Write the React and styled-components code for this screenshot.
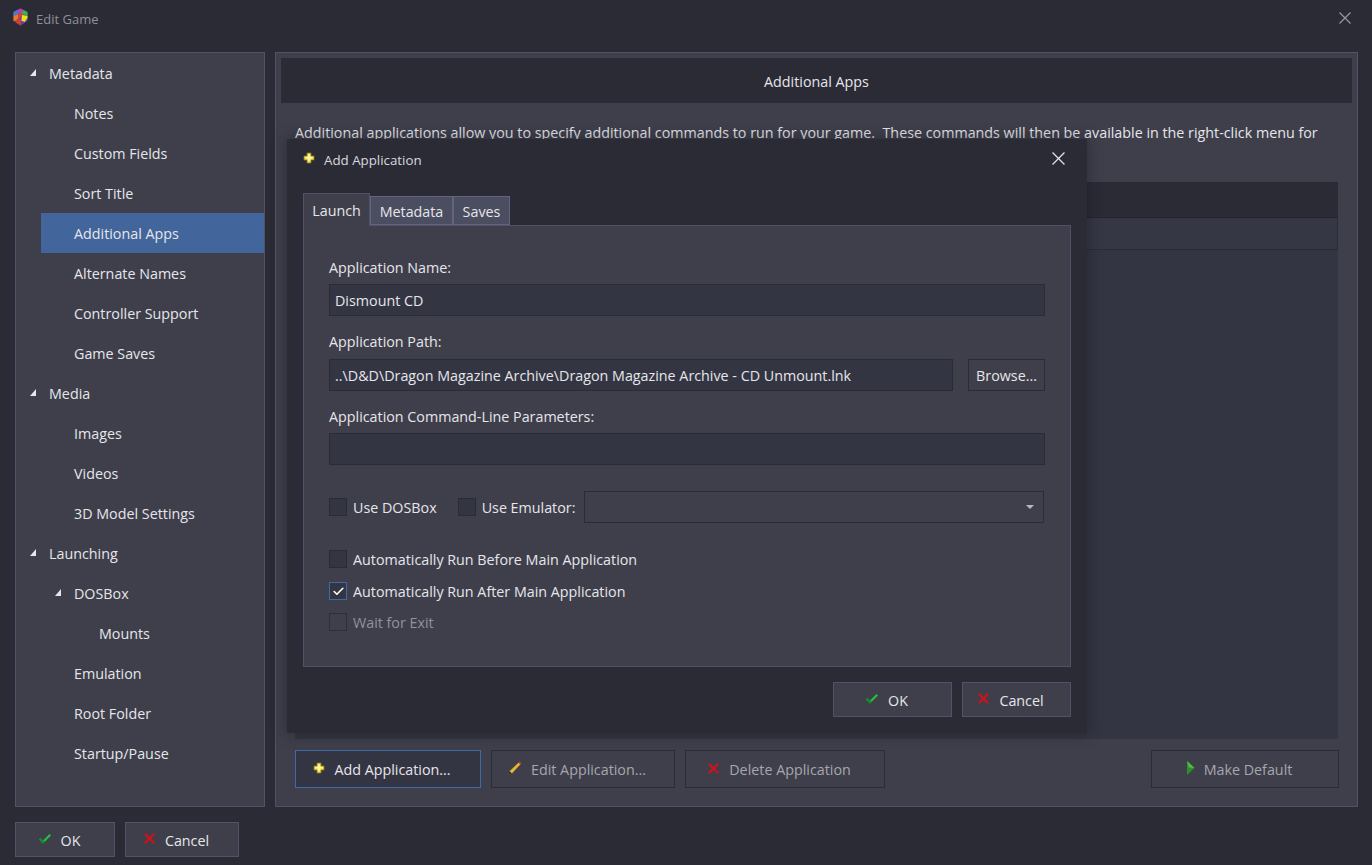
import React from 'react';
import styled, { createGlobalStyle } from 'styled-components';
import { Check } from 'lucide-react';

const GlobalStyle = createGlobalStyle`
  html, body {
    margin: 0;
    padding: 0;
    background: #2b2b36;
  }
  * {
    box-sizing: border-box;
  }
`;

const Window = styled.div`
  position: relative;
  width: 1372px;
  height: 865px;
  overflow: hidden;
  display: flex;
  flex-direction: column;
  background: #2b2b36;
  color: #e6e6ea;
  font-family: "Open Sans", "Noto Sans", sans-serif;
  font-size: 14.3px;
  line-height: 20px;
`;

const TitleBar = styled.div`
  height: 52px;
  flex: none;
  display: flex;
  align-items: flex-start;
  padding: 8px 21px 0 12px;
  gap: 7px;
`;

const WindowTitle = styled.span`
  flex: 1;
  font-size: 13px;
  line-height: 22px;
  color: #8f8f98;
`;

const CloseGlyph = styled.svg`
  display: block;
  flex: none;
  margin-top: ${(p) => p.$top || 0}px;
`;

const Body = styled.div`
  flex: none;
  height: 755px;
  display: flex;
  gap: 10px;
  padding: 0 14px 0 15px;
`;

const Tree = styled.div`
  width: 250px;
  flex: none;
  background: #3e3f4b;
  border: 1px solid #50526a;
`;

const TreeRow = styled.div`
  height: 40px;
  display: flex;
  align-items: center;
  padding: 2px 0 0 14px;
  margin-left: ${(p) => p.$level * 25}px;
  background: ${(p) => (p.$selected ? '#42659b' : 'transparent')};
`;

const Expander = styled.span`
  width: 19px;
  flex: none;
  display: flex;
`;

const Panel = styled.div`
  flex: 1;
  display: flex;
  flex-direction: column;
  padding: 5px 5px 0;
  background: #3e3f4b;
  border: 1px solid #50526a;
`;

const PanelHeader = styled.div`
  height: 45px;
  flex: none;
  display: flex;
  align-items: center;
  justify-content: center;
  padding-top: 2px;
  background: #2b2b36;
`;

const PanelBody = styled.div`
  flex: 1;
  display: flex;
  flex-direction: column;
  padding: 20px 14px 18px;
  min-height: 0;
`;

const Intro = styled.p`
  margin: 0;
  white-space: pre;
`;

const AppList = styled.div`
  flex: 1;
  margin-top: 39px;
  display: flex;
  flex-direction: column;
  background: #343542;
`;

const ListHeader = styled.div`
  height: 36px;
  flex: none;
  background: #2b2b36;
  border-bottom: 1px solid #24242d;
`;

const ListRow = styled.div`
  height: 32px;
  flex: none;
  background: #363745;
  border-right: 1px solid #2b2b36;
  border-bottom: 1px solid #2b2b36;
`;

const ButtonBar = styled.div`
  flex: none;
  display: flex;
  gap: 10px;
  margin: 11px -1px 0 0;
`;

const Spacer = styled.div`
  flex: 1;
`;

const Button = styled.div`
  width: ${(p) => p.$width}px;
  height: ${(p) => p.$height}px;
  flex: none;
  display: flex;
  align-items: center;
  justify-content: center;
  gap: 9px;
  padding-top: 2px;
  background: ${(p) => (p.$focused ? '#343542' : '#3e3f4b')};
  border: 1px solid ${(p) => (p.$focused ? '#3f6aa6' : p.$disabled || p.$outline ? '#2b2b36' : '#50526a')};
  color: ${(p) => (p.$disabled ? '#a6a6ad' : '#e6e6ea')};

  &:has(svg) {
    padding-right: 12px;
  }
`;

const Footer = styled.div`
  display: flex;
  gap: 10px;
  padding: 15px 15px 0;
`;

const IconSvg = styled.svg`
  display: block;
  flex: none;
  overflow: visible;
  margin-top: -4px;
`;

const Dialog = styled.div`
  position: absolute;
  left: 287px;
  top: 139px;
  width: 800px;
  height: 594px;
  display: flex;
  flex-direction: column;
  padding: 0 16px;
  background: #2b2b36;
  box-shadow: 0 0 14px rgba(20, 20, 28, 0.45);
`;

const DialogTitle = styled.div`
  height: 42px;
  flex: none;
  margin-bottom: 12px;
  display: flex;
  align-items: center;
  gap: 9px;
  padding-right: 6px;
  font-size: 13.3px;
`;

const DialogName = styled.span`
  flex: 1;
  color: #d8d8dd;
`;

const Tabs = styled.div`
  height: 33px;
  flex: none;
  display: flex;
  align-items: flex-start;
  position: relative;
  z-index: 1;
`;

const Tab = styled.div`
  height: ${(p) => (p.$active ? 33 : 29)}px;
  margin-top: ${(p) => (p.$active ? 0 : 3)}px;
  width: ${(p) => p.$width}px;
  display: flex;
  align-items: center;
  justify-content: center;
  padding-top: 2px;
  background: ${(p) => (p.$active ? '#3e3f4b' : '#4b4d60')};
  border: 1px solid ${(p) => (p.$active ? '#50526a' : '#62647f')};
  border-bottom: ${(p) => (p.$active ? 'none' : undefined)};
`;

const TabPanel = styled.div`
  height: 442px;
  flex: none;
  margin-top: -1px;
  display: flex;
  flex-direction: column;
  padding: 32px 25px 0;
  background: #3e3f4b;
  border: 1px solid #50526a;
`;

const Field = styled.div`
  display: flex;
  flex-direction: column;
  gap: ${(p) => p.$gap || 6}px;
  margin-bottom: 16px;
`;

const InputRow = styled.div`
  display: flex;
  gap: 15px;
`;

const Input = styled.div`
  flex: 1 0 auto;
  height: 32px;
  display: flex;
  align-items: center;
  padding: 2px 5px 0;
  background: #343542;
  border: 1px solid #2b2b36;
`;

const Options = styled.div`
  display: flex;
  align-items: center;
  margin-top: 10px;
  padding-right: 1px;
  height: 32px;
`;

const OptionLabels = styled.div`
  display: flex;
  padding-top: 2px;
`;

const CheckRow = styled.label`
  display: flex;
  align-items: center;
  gap: 6px;
  height: 20px;
  margin-top: ${(p) => p.$top || 0}px;
  margin-right: ${(p) => p.$right || 0}px;
  color: ${(p) => (p.$disabled ? '#92929a' : '#e6e6ea')};
`;

const Box = styled.span`
  width: 18px;
  height: 18px;
  flex: none;
  margin-top: -2px;
  display: flex;
  align-items: center;
  justify-content: center;
  color: #fff;
  background: #343542;
  border: 1px solid ${(p) => (p.$checked ? '#3f6aa6' : p.$disabled ? '#2f2f3b' : '#2b2b36')};
  ${(p) => p.$disabled && 'background: transparent;'}
`;

const Select = styled.div`
  width: 460px;
  height: 32px;
  margin-left: auto;
  display: flex;
  align-items: center;
  justify-content: flex-end;
  padding-right: 9px;
  background: #3e3f4b;
  border: 1px solid #2b2b36;
`;

const DialogActions = styled.div`
  display: flex;
  justify-content: flex-end;
  gap: 10px;
  margin-top: 15px;
`;

const treeItems = [
  { label: 'Metadata', level: 0, open: true },
  { label: 'Notes', level: 1 },
  { label: 'Custom Fields', level: 1 },
  { label: 'Sort Title', level: 1 },
  { label: 'Additional Apps', level: 1, selected: true },
  { label: 'Alternate Names', level: 1 },
  { label: 'Controller Support', level: 1 },
  { label: 'Game Saves', level: 1 },
  { label: 'Media', level: 0, open: true },
  { label: 'Images', level: 1 },
  { label: 'Videos', level: 1 },
  { label: '3D Model Settings', level: 1 },
  { label: 'Launching', level: 0, open: true },
  { label: 'DOSBox', level: 1, open: true },
  { label: 'Mounts', level: 2 },
  { label: 'Emulation', level: 1 },
  { label: 'Root Folder', level: 1 },
  { label: 'Startup/Pause', level: 1 },
];

const Logo = () => (
  <IconSvg width="17" height="18" viewBox="0 0 17 18" style={{ marginTop: 0 }}>
    <path d="M8.500 0.500 15.500 4 15.500 13 8.500 17.500 1.500 13 1.500 4Z" fill="#7a3fa8" />
    <path d="M1.500 4 5 2 6.500 5 3.500 7.500 1.500 7Z" fill="#2f86d8" />
    <path d="M5 2 8.500 0.500 11.500 2 9 5 6.500 5Z" fill="#b53fb8" />
    <path d="M11.500 2 15.500 4 15.500 8 11 6.500 9 5Z" fill="#3fae4a" />
    <path d="M1.500 7 3.500 7.500 6 6 6.500 10 4 12.500 1.500 13Z" fill="#ee7a1f" />
    <path d="M6.500 5 9 5 10 8 7 10.500 6.500 10Z" fill="#e8401f" />
    <path d="M10 7 15.500 8 15.500 10 12.500 14 9.500 13Z" fill="#e8e41c" />
    <path d="M4 12.500 7 10.500 9 13.500 8.500 17.500 4.500 15Z" fill="#d8401f" />
    <path d="M9.500 13 12.500 14 12 15 8.500 17.500Z" fill="#6a3aa8" />
  </IconSvg>
);

const PlusIcon = () => (
  <IconSvg width="12" height="12" viewBox="0 0 12 12">
    <path d="M4 1h4v3h3v4H8v3H4V8H1V4h3z" fill="#f2de4d" stroke="#8c7a17" strokeWidth="0.8" strokeLinejoin="round" />
    <path d="M5 2.500h2v2.500h2.500v1.500H7V9H5V6.500H2.500V5H5z" fill="#fff6b0" />
  </IconSvg>
);

const CheckIcon = () => (
  <IconSvg width="14" height="12" viewBox="0 0 14 12">
    <path d="M1 6.500 5 10.500 13 2.500 11.500 1 5 7.500 2.500 5z" fill="#1fc43a" />
    <path d="M1 6.500 5 10.500 7 8.500 5 7.500 2.500 5z" fill="#118a2a" />
  </IconSvg>
);

const CrossIcon = () => (
  <IconSvg width="13" height="13" viewBox="0 0 13 13">
    <path d="M1 2.500 2.500 1 6.500 4.800 10.500 1 12 2.500 8.200 6.500 12 10.500 10.500 12 6.500 8.200 2.500 12 1 10.500 4.800 6.500z" fill="#c8141f" />
  </IconSvg>
);

const PencilIcon = () => (
  <IconSvg width="14" height="14" viewBox="0 0 14 14">
    <path d="M0.500 13.500 1.500 10 10.500 1.500 12.500 3.500 4 12.500z" fill="#e2b93b" stroke="#4a4020" strokeWidth="0.4" />
    <path d="M0.500 13.500 1.500 10 4 12.500z" fill="#2f2f28" />
    <path d="M10.500 1.500 11.500 0.500 13.500 2.500 12.500 3.500z" fill="#d8342c" />
  </IconSvg>
);

const PlayIcon = () => (
  <IconSvg width="9" height="14" viewBox="0 0 9 14">
    <path d="M1 0 8.500 7 1 14z" fill="#2c8f2c" />
    <path d="M1 0 8.500 7 3 6.500z" fill="#55bf4a" />
  </IconSvg>
);

const CloseIcon = ({ size, color, top }) => (
  <CloseGlyph $top={top} width={size} height={size} viewBox="0 0 12 12">
    <path d="M0.500 0.500 11.500 11.500M11.500 0.500 0.500 11.500" stroke={color} strokeWidth="1.100" />
  </CloseGlyph>
);

const ExpandArrow = () => (
  <svg width="6" height="7" viewBox="0 0 6 7" style={{ marginTop: -4 }}>
    <path d="M6 0V7H0z" fill="#e6e6ea" />
  </svg>
);

const Checkbox = ({ label, checked, disabled, top, right }) => (
  <CheckRow $top={top} $right={right} $disabled={disabled}>
    <Box $checked={checked} $disabled={disabled}>
      {checked && <Check size={13} strokeWidth={3} />}
    </Box>
    {label}
  </CheckRow>
);

export default function App() {
  return (
    <>
      <GlobalStyle />
      <Window>
        <TitleBar>
          <Logo />
          <WindowTitle>Edit Game</WindowTitle>
          <CloseIcon size={12} color="#9a9aa2" top={4} />
        </TitleBar>

        <Body>
          <Tree>
            {treeItems.map((item) => (
              <TreeRow key={item.label} $level={item.level} $selected={item.selected}>
                <Expander>{item.open && <ExpandArrow />}</Expander>
                {item.label}
              </TreeRow>
            ))}
          </Tree>

          <Panel>
            <PanelHeader>Additional Apps</PanelHeader>
            <PanelBody>
              <Intro>Additional applications allow you to specify additional commands to run for your game.  These commands will then be available in the right-click menu for</Intro>
              <AppList>
                <ListHeader />
                <ListRow />
              </AppList>
              <ButtonBar>
                <Button $width={186} $height={38} $focused><PlusIcon />Add Application...</Button>
                <Button $width={184} $height={38} $disabled><PencilIcon />Edit Application...</Button>
                <Button $width={200} $height={38} $disabled><CrossIcon />Delete Application</Button>
                <Spacer />
                <Button $width={188} $height={38} $disabled><PlayIcon />Make Default</Button>
              </ButtonBar>
            </PanelBody>
          </Panel>
        </Body>

        <Footer>
          <Button $width={100} $height={35}><CheckIcon />OK</Button>
          <Button $width={114} $height={35}><CrossIcon />Cancel</Button>
        </Footer>

        <Dialog>
          <DialogTitle>
            <PlusIcon />
            <DialogName>Add Application</DialogName>
            <CloseIcon size={13} color="#e6e6ea" top={-3} />
          </DialogTitle>
          <Tabs>
            <Tab $active $width={67}>Launch</Tab>
            <Tab $width={83}>Metadata</Tab>
            <Tab $width={57}>Saves</Tab>
          </Tabs>
          <TabPanel>
            <Field>
              Application Name:
              <Input>Dismount CD</Input>
            </Field>
            <Field $gap={7}>
              Application Path:
              <InputRow>
                <Input>..\D&amp;D\Dragon Magazine Archive\Dragon Magazine Archive - CD Unmount.lnk</Input>
                <Button $width={77} $height={32} $outline>Browse...</Button>
              </InputRow>
            </Field>
            <Field>
              Application Command-Line Parameters:
              <Input />
            </Field>
            <Options>
              <OptionLabels>
                <Checkbox label="Use DOSBox" right={21} />
                <Checkbox label="Use Emulator:" />
              </OptionLabels>
              <Select>
                <svg width="8" height="4" viewBox="0 0 8 4"><path d="M0 0h8L4 4z" fill="#b8b8c0" /></svg>
              </Select>
            </Options>
            <Checkbox label="Automatically Run Before Main Application" top={27} />
            <Checkbox label="Automatically Run After Main Application" checked top={12} />
            <Checkbox label="Wait for Exit" disabled top={11} />
          </TabPanel>
          <DialogActions>
            <Button $width={119} $height={35}><CheckIcon />OK</Button>
            <Button $width={109} $height={35}><CrossIcon />Cancel</Button>
          </DialogActions>
        </Dialog>
      </Window>
    </>
  );
}
